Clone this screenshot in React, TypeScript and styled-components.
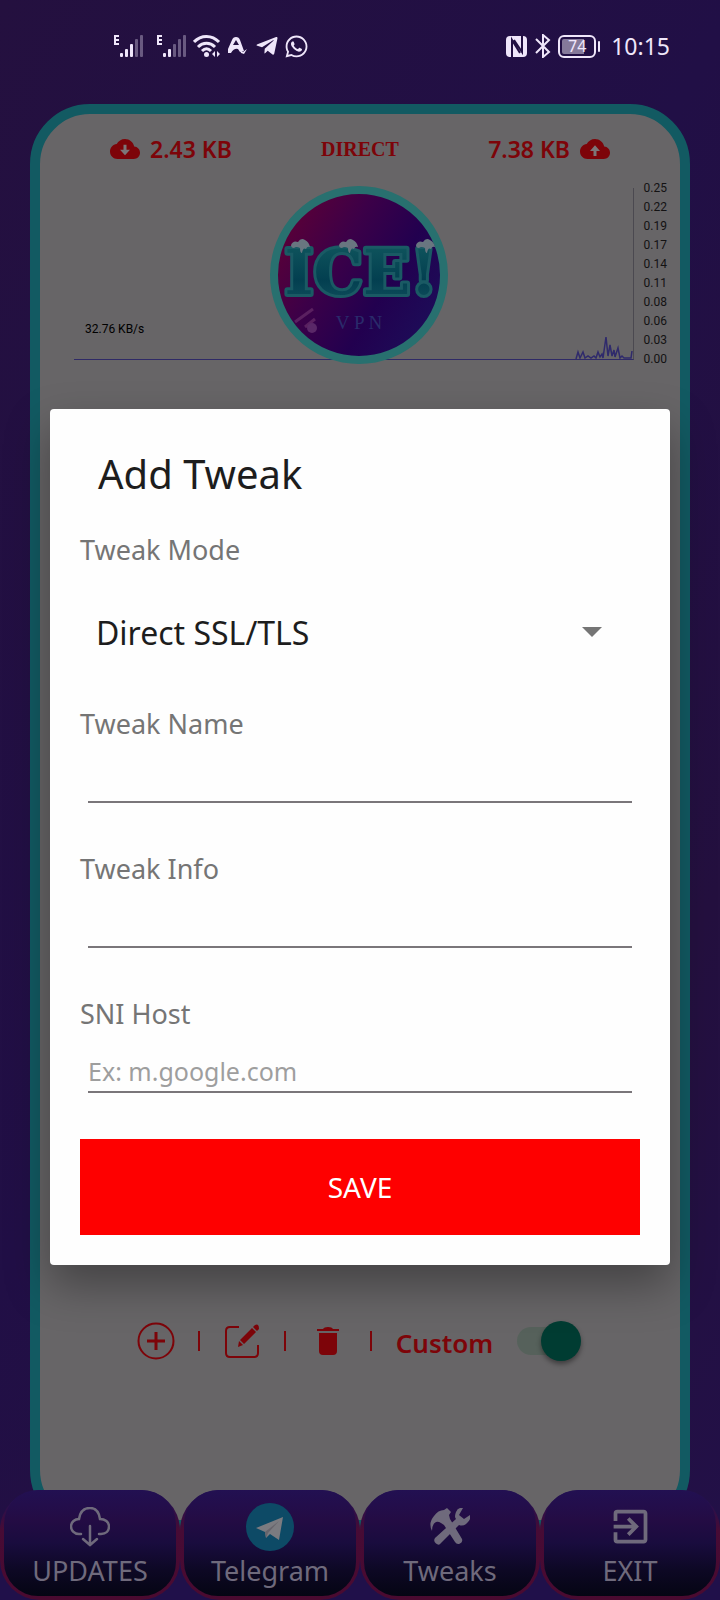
import React, { useState } from "react";
import styled, { createGlobalStyle } from "styled-components";
import { FaTelegramPlane, FaWhatsapp } from "react-icons/fa";
import { MdExitToApp } from "react-icons/md";

const sans = `"Noto Sans", "Open Sans", sans-serif`;
const red = "#7d0409";
const panel = "#676567";

const GlobalStyle = createGlobalStyle`
  * { box-sizing: border-box; }
  body { margin: 0; font-family: ${sans}; background: #221042; }
  button, input, select { font-family: inherit; }
`;

const Screen = styled.div`
  position: relative;
  display: flex;
  flex-direction: column;
  min-height: 100vh;
  overflow: hidden;
  background: linear-gradient(120deg, #24103f 0%, #210f46 45%, #24103f 75%, #221048 100%);
`;

const StatusBar = styled.header`
  display: flex;
  justify-content: space-between;
  align-items: flex-start;
  height: 104px;
  padding: 32px 50px 0 113px;
  color: #efe6fa;
`;

const StatusGroup = styled.div<{ $gap: number }>`
  display: flex;
  align-items: center;
  gap: ${(p) => p.$gap}px;
  height: 28px;
`;

const Clock = styled.time`
  margin-left: 4px;
  font-size: 23px;
  line-height: 28px;
`;

const Battery = styled.div`
  display: flex;
  align-items: center;
  gap: 2px;
`;

const BatteryCell = styled.div`
  width: 38px;
  height: 23px;
  border: 2px solid #efe6fa;
  border-radius: 6px;
  background: linear-gradient(90deg, #85799a 72%, transparent 72%) content-box;
  padding: 2px;
  font-size: 16px;
  line-height: 15px;
  text-align: center;
`;

const BatteryTip = styled.div`
  width: 2px;
  height: 11px;
  border-radius: 1px;
  background: #efe6fa;
`;

const Card = styled.main`
  display: flex;
  flex: 1;
  flex-direction: column;
  margin: 0 30px;
  border: 10px solid #125a62;
  border-radius: 60px;
  background: ${panel};
`;

const Stats = styled.div`
  display: grid;
  grid-template-columns: 1fr auto 1fr;
  align-items: center;
  height: 65px;
  padding: 5px 70px 0;
  color: ${red};
`;

const Traffic = styled.div<{ $end?: boolean }>`
  display: flex;
  justify-content: ${(p) => (p.$end ? "flex-end" : "flex-start")};
  align-items: center;
  gap: 10px;
  font-size: 23px;
  line-height: 30px;
  font-weight: 600;
`;

const Route = styled.strong`
  font-family: "Liberation Serif", serif;
  font-size: 20px;
  line-height: 26px;
`;

const Monitor = styled.section`
  position: relative;
  display: flex;
  height: 190px;
  padding: 0 13px 0 34px;
`;

const Plot = styled.div`
  display: flex;
  flex: 1;
  justify-content: flex-end;
  align-items: flex-end;
  height: 172px;
  margin-top: 9px;
  border-right: 1px solid #4b4950;
  border-bottom: 1px solid #2f2a66;
`;

const Scale = styled.ol`
  margin: 0 0 0 10px;
  padding: 0;
  list-style: none;
  color: #131213;
  font-family: Roboto, sans-serif;
  font-size: 12px;
  line-height: 19px;
`;

const Speed = styled.div`
  position: absolute;
  left: 45px;
  top: 141px;
  color: #000;
  font-family: Roboto, sans-serif;
  font-size: 12px;
  line-height: 19px;
`;

const Logo = styled.div`
  position: absolute;
  left: 50%;
  top: 6px;
  width: 180px;
  height: 180px;
  margin-left: -91px;
`;

const Toolbar = styled.div`
  display: flex;
  justify-content: center;
  align-items: center;
  height: 42px;
  margin: auto 0 158px;
  color: ${red};
`;

const ToolButton = styled.button`
  display: flex;
  justify-content: center;
  align-items: center;
  width: 60px;
  height: 42px;
  padding: 0;
  border: 0;
  background: none;
  color: inherit;
`;

const Divider = styled.span`
  width: 2px;
  height: 20px;
  margin: 0 12px;
  background: ${red};
`;

const SwitchLabel = styled.label`
  display: flex;
  align-items: center;
  gap: 24px;
  margin: 0 13px 0 12px;
  font-size: 26px;
  line-height: 36px;
  font-weight: 600;
`;

const SwitchText = styled.span`
  padding-top: 4px;
`;

const Switch = styled.input`
  display: flex;
  justify-content: flex-end;
  align-items: center;
  appearance: none;
  width: 64px;
  height: 28px;
  margin: 0;
  border-radius: 14px;
  background: linear-gradient(90deg, #56615b 56px, transparent 56px);

  &::after {
    content: "";
    width: 40px;
    height: 40px;
    border-radius: 50%;
    background: #003c32;
    box-shadow: 0 3px 5px rgba(0, 0, 0, 0.4);
  }
  &:not(:checked) { justify-content: flex-start; }
`;

const Nav = styled.nav`
  position: relative;
  display: grid;
  grid-template-columns: repeat(4, 1fr);
  margin-top: -40px;
  background: linear-gradient(transparent 60px, #20104a 60px);
`;

const NavItem = styled.button`
  padding: 0 4px 4px;
  border: 0;
  border-radius: 40px;
  background: linear-gradient(#25104f 12px, #470b35 40px, #4a0a30);
  color: #6f6a7c;
`;

const NavFace = styled.span`
  display: flex;
  flex-direction: column;
  align-items: center;
  height: 106px;
  padding-top: 9px;
  border-radius: 34px;
  background: linear-gradient(#221052 0%, #240c44 28%, #190c3e 50%, #0d0824 76%, #050513 100%);
`;

const NavIcon = styled.span`
  display: flex;
  justify-content: center;
  align-items: center;
  height: 55px;
`;

const NavText = styled.span`
  font-size: 27px;
  line-height: 34px;
`;

const Overlay = styled.div`
  position: absolute;
  inset: 0;
  display: flex;
  justify-content: center;
  align-items: center;
  padding: 74px 50px 0;
`;

const Dialog = styled.form`
  width: 100%;
  padding: 38px 30px 30px;
  border-radius: 4px;
  background: #fefefe;
  box-shadow: 0 20px 44px rgba(0, 0, 0, 0.34);
`;

const Title = styled.h1`
  margin: 0 0 32px 18px;
  color: #1d1d1d;
  font-size: 40px;
  line-height: 53px;
  font-weight: 400;
`;

const Field = styled.div`
  display: flex;
  flex-direction: column;

  & + & { margin-top: 48px; }
`;

const ModeField = styled.div`
  position: relative;
  display: flex;
  flex-direction: column;
  margin-bottom: 32px;
`;

const Label = styled.label`
  color: #757575;
  font-size: 27px;
  line-height: 36px;
`;

const Select = styled.select`
  appearance: none;
  height: 84px;
  margin-top: 22px;
  padding: 0 50px 0 16px;
  border: 0;
  background: none;
  color: #1d1d1d;
  font-size: 32px;
`;

const Caret = styled.svg`
  position: absolute;
  right: 38px;
  bottom: 37px;
  pointer-events: none;
`;

const Input = styled.input`
  height: 61px;
  margin: 0 8px;
  padding: 19px 0 0;
  border: 0;
  border-bottom: 2px solid #7a767a;
  border-radius: 0;
  outline: 0;
  background: none;
  color: #1d1d1d;
  font-size: 25px;

  &::placeholder { color: #9e9e9e; opacity: 1; }
`;

const Save = styled.button`
  width: 100%;
  height: 96px;
  margin-top: 46px;
  border: 0;
  background: #fe0000;
  color: #fff;
  font-size: 28px;
`;

const Signal = ({ level }: { level: number }) => (
  <svg width="32" height="24" viewBox="0 0 32 24" fill="#efe6fa">
    <path d="M1 1h5v2H3v2h3v2H3v2h3v2H1z" />
    {[4, 8, 13, 18, 22].map((h, i) => (
      <rect key={h} x={7 + i * 5} y={23 - h} width="3" height={h} rx="1" opacity={i < level ? 1 : 0.35} />
    ))}
  </svg>
);

const Wifi = () => (
  <svg width="30" height="24" viewBox="0 0 30 24" fill="none" stroke="#efe6fa" strokeWidth="3">
    <path d="M1 8C8 .5 19 .5 26 8M5 13c5-5 12-5 17 0M9 17c3-3 6-3 9 0" />
    <circle cx="13.500" cy="20.500" r="2.500" fill="#efe6fa" stroke="none" />
    <path d="M22 17v6l-3-3zM24 17v6l3-3z" fill="#efe6fa" stroke="none" />
  </svg>
);

const AppMark = () => (
  <svg width="22" height="20" viewBox="0 0 22 20" fill="#efe6fa">
    <path fillRule="evenodd" d="M0 13L4 4Q5 1 8 1T12 4L16 15L12 16L10 13Q6 12 3 17L0 17zM5 9L11 9L8 4z" />
    <path d="M12 14l3 2 4-3-3 5-3-1z" />
  </svg>
);

const Nfc = () => (
  <svg width="22" height="22" viewBox="0 0 22 22">
    <rect x="0" y="1" width="21" height="21" rx="4" fill="#efe6fa" />
    <path d="M6 22V5L14 18M16 1V17L8 5" fill="none" stroke="#221042" strokeWidth="2" />
  </svg>
);

const Bluetooth = () => (
  <svg width="16" height="24" viewBox="0 0 16 24" fill="none" stroke="#efe6fa" strokeWidth="2">
    <path d="M1 5l13 13-6 5V1l6 5L1 19" />
  </svg>
);

const Cloud = ({ up }: { up?: boolean }) => (
  <svg width="30" height="20" viewBox="0 4 24 16" fill="currentColor">
    <path d="M19.350 10.040C18.670 6.590 15.640 4 12 4 9.110 4 6.600 5.640 5.350 8.040 2.340 8.360 0 10.910 0 14c0 3.310 2.690 6 6 6h13c2.760 0 5-2.240 5-5 0-2.640-2.050-4.780-4.650-4.960z" />
    <path
      fill="#7c7678"
      transform={up ? undefined : "rotate(180 12 13)"}
      d="M12 9L16 13.500H13.200V17.500H10.800V13.500H8z"
    />
  </svg>
);

const Spikes = () => (
  <svg width="58" height="24" viewBox="0 0 58 24" fill="none" stroke="#2f2a6c" strokeWidth="1.500">
    <path d="M1 24L3 17L5 23L8 17L10 23L13 21L16 23L19 21L21 23L23 17L25 22L27 19L28 23L31 2L33 21L35 10L37 21L39 15L40 22L43 13L45 23L47 21L49 23H56L57 16" />
  </svg>
);

const Snow = ({ x, y }: { x: number; y: number }) => (
  <path
    transform={`translate(${x} ${y})`}
    d="M0 6Q2 1 7 3Q10-2 14 1Q18 3 19 8Q16 7 15 10Q12 8 11 14Q9 14 9 9Q5 7 3 9Q0 9 0 6z"
    fill="#697680"
  />
);

const IceLogo = () => (
  <svg width="180" height="180" viewBox="0 0 180 180" role="img" aria-label="Ice VPN">
    <defs>
      <linearGradient id="disc" x1="0" y1="0.200" x2="1" y2="0.800">
        <stop offset="0" stopColor="#5f0035" />
        <stop offset="0.350" stopColor="#3c0048" />
        <stop offset="0.650" stopColor="#22004f" />
        <stop offset="1" stopColor="#1c0f5a" />
      </linearGradient>
      <linearGradient id="ice" x1="0" y1="0" x2="0" y2="1">
        <stop offset="0" stopColor="#125a60" />
        <stop offset="0.600" stopColor="#033f50" />
        <stop offset="1" stopColor="#12525f" />
      </linearGradient>
    </defs>
    <circle cx="90" cy="90" r="85" fill="url(#disc)" stroke="#28706f" strokeWidth="8" />
    <text
      x="92"
      y="109"
      textAnchor="middle"
      fontFamily="DejaVu Serif, serif"
      fontWeight="700"
      fontSize="62"
      fill="url(#ice)"
      stroke="#1a5a64"
      strokeWidth="6"
      strokeLinejoin="round"
      paintOrder="stroke"
    >
      ICE!
    </text>
    <Snow x={22} y={54} />
    <Snow x={70} y={54} />
    <Snow x={147} y={54} />
    <path d="M26 137L44 124M36 142l10-8" stroke="#5a2060" strokeWidth="3" />
    <circle cx="43" cy="143" r="5" fill="#5a2868" />
    <text x="90" y="144" textAnchor="middle" fontFamily="Liberation Serif, serif" fontSize="19" fill="#2a2b6b">
      V P N
    </text>
  </svg>
);

const PlusIcon = () => (
  <svg width="38" height="38" viewBox="0 0 38 38" fill="none" stroke="currentColor">
    <circle cx="19" cy="19" r="17.500" strokeWidth="2" />
    <path d="M10 19h18M19 10v18" strokeWidth="3" />
  </svg>
);

const EditIcon = () => (
  <svg width="34" height="34" viewBox="0 0 34 34" fill="currentColor">
    <path d="M14 3H5Q1 3 1 7v22q0 4 4 4h24q4 0 4-4v-8" fill="none" stroke="currentColor" strokeWidth="2" />
    <path d="M27 4l4 4L19 20l-4-4zM28 3l2-2q2-1 3 0t1 4l-2 2zM14 17l4 4-5 2z" />
  </svg>
);

const TrashIcon = () => (
  <svg width="22" height="28" viewBox="0 0 22 28" fill="currentColor">
    <path d="M0 2h6q1-2 5-2t5 2h6v2H0zM2 6h18v18q0 4-4 4H6q-4 0-4-4z" />
  </svg>
);

const UpdateIcon = () => (
  <svg width="40" height="40" viewBox="0 0 40 40" fill="none" stroke="currentColor" strokeWidth="2.500" strokeLinecap="round">
    <path d="M11 27H9C4 27 1 23 1 19.500C1 15 5 12 9 12C10 5 14 1 20 1S29 5 30 12C35 12 39 15 39 19.500C39 24 36 27 31 27H29" />
    <path d="M20 19v19M13 32l7 6 7-6" />
  </svg>
);

const TelegramIcon = () => (
  <svg width="48" height="48" viewBox="0 0 48 48">
    <circle cx="24" cy="24" r="24" fill="#0d4a66" />
    <path d="M10 25L37 14L33 37L24 31L20 35L19 29z" fill="#7b7b80" />
    <path d="M19 29L33 18L22 30L20 35z" fill="#67656c" />
  </svg>
);

const ToolsIcon = () => (
  <svg width="40" height="38" viewBox="0 0 40 38" fill="currentColor">
    <path d="M4 8Q8 2 14 2L17 0L21 4L19 7L20 11L32 31Q33 34 30 35.500T25 34L14 17L11 15Q8 13 6 14Q2 16 2 23Q-2 15 4 8z" />
    <path d="M33 0Q28-1 26 4T26 11L5 30Q3 33 6 35.500T11 35L29 17Q34 19 38 14T40 7L34 11L29 7z" />
  </svg>
);

const scale = ["0.25", "0.22", "0.19", "0.17", "0.14", "0.11", "0.08", "0.06", "0.03", "0.00"];

const navItems = [
  { text: "UPDATES", icon: <UpdateIcon /> },
  { text: "Telegram", icon: <TelegramIcon /> },
  { text: "Tweaks", icon: <ToolsIcon /> },
  { text: "EXIT", icon: <MdExitToApp size={45} /> },
];

export default function App() {
  const [custom, setCustom] = useState(true);

  return (
    <Screen>
      <GlobalStyle />
      <StatusBar>
        <StatusGroup $gap={5}>
          <StatusGroup $gap={11}>
            <Signal level={3} />
            <Signal level={2} />
          </StatusGroup>
          <Wifi />
          <AppMark />
          <FaTelegramPlane size={24} />
          <FaWhatsapp size={25} />
        </StatusGroup>
        <StatusGroup $gap={7}>
          <Nfc />
          <Bluetooth />
          <Battery>
            <BatteryCell>74</BatteryCell>
            <BatteryTip />
          </Battery>
          <Clock>10:15</Clock>
        </StatusGroup>
      </StatusBar>

      <Card>
        <Stats>
          <Traffic>
            <Cloud />
            2.43 KB
          </Traffic>
          <Route>DIRECT</Route>
          <Traffic $end>
            7.38 KB
            <Cloud up />
          </Traffic>
        </Stats>
        <Monitor>
          <Plot>
            <Spikes />
          </Plot>
          <Scale>
            {scale.map((value) => (
              <li key={value}>{value}</li>
            ))}
          </Scale>
          <Speed>32.76 KB/s</Speed>
          <Logo>
            <IceLogo />
          </Logo>
        </Monitor>
        <Toolbar>
          <ToolButton type="button" aria-label="Add">
            <PlusIcon />
          </ToolButton>
          <Divider />
          <ToolButton type="button" aria-label="Edit">
            <EditIcon />
          </ToolButton>
          <Divider />
          <ToolButton type="button" aria-label="Delete">
            <TrashIcon />
          </ToolButton>
          <Divider />
          <SwitchLabel>
            <SwitchText>Custom</SwitchText>
            <Switch type="checkbox" checked={custom} onChange={(e) => setCustom(e.target.checked)} />
          </SwitchLabel>
        </Toolbar>
      </Card>

      <Nav>
        {navItems.map((item) => (
          <NavItem key={item.text} type="button">
            <NavFace>
              <NavIcon>{item.icon}</NavIcon>
              <NavText>{item.text}</NavText>
            </NavFace>
          </NavItem>
        ))}
      </Nav>

      <Overlay>
        <Dialog role="dialog" aria-labelledby="dialog-title" onSubmit={(e) => e.preventDefault()}>
          <Title id="dialog-title">Add Tweak</Title>
          <ModeField>
            <Label htmlFor="mode">Tweak Mode</Label>
            <Select id="mode">
              <option>Direct SSL/TLS</option>
            </Select>
            <Caret width="20" height="10" viewBox="0 0 20 10">
              <path d="M0 0h20L10 10z" fill="#757575" />
            </Caret>
          </ModeField>
          <Field>
            <Label htmlFor="name">Tweak Name</Label>
            <Input id="name" type="text" />
          </Field>
          <Field>
            <Label htmlFor="info">Tweak Info</Label>
            <Input id="info" type="text" />
          </Field>
          <Field>
            <Label htmlFor="host">SNI Host</Label>
            <Input id="host" type="text" placeholder="Ex: m.google.com" />
          </Field>
          <Save type="submit">SAVE</Save>
        </Dialog>
      </Overlay>
    </Screen>
  );
}
